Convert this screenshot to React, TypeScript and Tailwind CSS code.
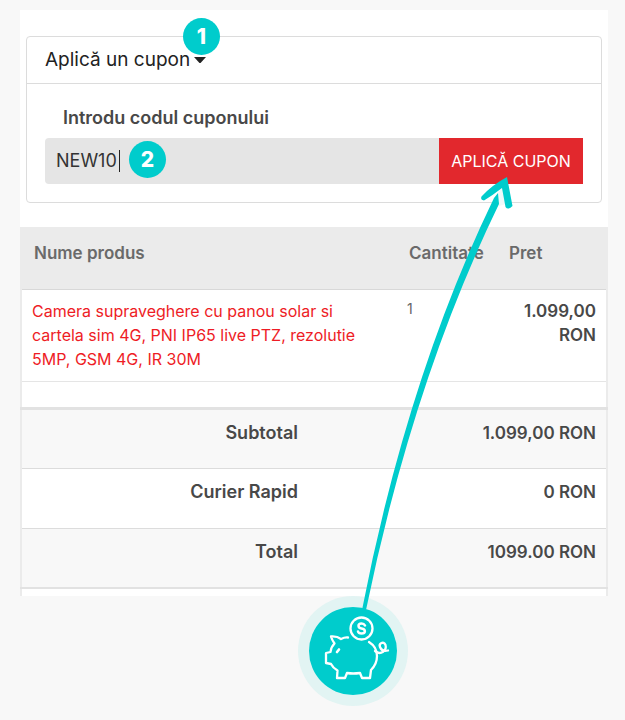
import { useState } from 'react';

const totals = [
  { label: 'Subtotal', value: '1.099,00 RON' },
  { label: 'Curier Rapid', value: '0 RON' },
  { label: 'Total', value: '1099.00 RON' },
];

function StepBadge({ step, className }: { step: number; className: string }) {
  return (
    <span
      className={`absolute flex size-[37px] items-center justify-center rounded-full bg-[#00cccc] text-[21px] font-extrabold text-white ${className}`}
    >
      {step}
    </span>
  );
}

function CouponBox() {
  const [code, setCode] = useState('NEW10');

  return (
    <section className="relative mx-1.5 rounded border border-[#dcdcdc]">
      <button type="button" className="flex w-full items-center gap-1 border-b border-[#dcdcdc] px-[18px] py-[11px] text-left text-[19px] leading-6 text-[#222]">
        Aplică un cupon
        <svg width="12" height="6" viewBox="0 0 12 6" fill="currentColor" aria-hidden="true">
          <path d="M0 0h12L7 5.4q-1 1-2 0z" />
        </svg>
      </button>
      <StepBadge step={1} className="-top-[19px] left-[156px]" />

      <form className="px-[18px] pt-[22px] pb-[18px]" onSubmit={(e) => e.preventDefault()}>
        <label htmlFor="coupon" className="block px-[18px] text-lg leading-6 font-semibold text-[#484848]">
          Introdu codul cuponului
        </label>
        <div className="relative mt-2 flex h-[46px]">
          <input
            id="coupon"
            value={code}
            onChange={(e) => setCode(e.target.value)}
            className="min-w-0 flex-1 rounded-l bg-[#e5e5e5] px-[11px] text-lg text-[#333] outline-none"
          />
          <span className="absolute top-3 left-[74px] h-[22px] w-px bg-[#222]" />
          <StepBadge step={2} className="top-[3px] left-[84px]" />
          <button type="submit" className="w-36 bg-[#e2282d] text-base text-white">
            APLICĂ CUPON
          </button>
        </div>
      </form>
    </section>
  );
}

function ProductTable() {
  return (
    <table className="mt-6 w-full table-fixed border-x-2 border-[#ebebeb] text-[17px] leading-6 text-[#484848]">
      <colgroup>
        <col />
        <col className="w-[100px]" />
        <col className="w-[106px]" />
      </colgroup>
      <thead>
        <tr className="h-[62px] border-b border-[#d8d8d8] bg-[#ebebeb] text-left align-top text-[#6a6a6a]">
          <th className="px-3 pt-[14px] font-semibold">Nume produs</th>
          <th className="pt-[14px] pl-2 font-semibold">Cantitate</th>
          <th className="pt-[14px] pl-2 font-semibold">Pret</th>
        </tr>
      </thead>
      <tbody>
        <tr className="h-[92px] border-b border-[#e5e5e5] align-top">
          <td className="pt-[9px] pr-8 pl-2.5 text-base leading-6">
            <a href="#produs" className="text-[#ee1c25]">
              Camera supraveghere cu panou solar si cartela sim 4G, PNI IP65 live PTZ, rezolutie 5MP, GSM 4G, IR 30M
            </a>
          </td>
          <td className="pt-[7px] pl-1.5 text-sm leading-6 text-[#666]">1</td>
          <td className="pt-[9px] pr-2.5 text-right font-semibold">1.099,00 RON</td>
        </tr>
      </tbody>
    </table>
  );
}

function TotalsTable() {
  return (
    <table className="w-full table-fixed border-x-2 border-[#ebebeb] text-[#484848]">
      <tbody className="border-t-[3px] border-b-2 border-[#e2e2e2]">
        {totals.map((row) => (
          <tr key={row.label} className="h-[60px] border-b border-[#dcdcdc] align-top odd:bg-[#f8f8f8]">
            <th className="pt-[11px] pr-4 text-right text-lg leading-6 font-semibold">{row.label}</th>
            <td className="pt-[11px] pr-2.5 text-right text-[17px] leading-6 font-semibold">{row.value}</td>
          </tr>
        ))}
      </tbody>
    </table>
  );
}

function PiggyBank() {
  return (
    <div className="relative flex size-[110px] items-center justify-center rounded-full bg-[#e2f4f3]">
      <div className="flex size-[88px] items-center justify-center rounded-full bg-[#00cccc]">
        <svg
          width="88"
          height="88"
          viewBox="309 607 88 88"
          fill="none"
          stroke="white"
          strokeWidth="2.3"
          strokeLinecap="round"
          strokeLinejoin="round"
          aria-label="Pușculiță"
        >
          <path d="M348 637.500Q345 637 341 639Q337 636 331 636.500Q332 640 334.500 643.500Q331 647 330.500 652L326 653V663L331 664Q333 668 337.500 670.500L337 678H345L347 673Q353 674 360 673L362 678H370L371 670Q377 664 377 656Q377 647 369 642" />
          <path d="M337 652l2-2.500" strokeWidth="2.600" />
          <path d="M375 651C381 656 387 650 385.500 645C383.500 640.500 378.500 643.500 380 647Q382 652 388 650.500" />
          <circle cx="361.500" cy="628.500" r="11" />
          <path d="M365 625.500Q364 623.500 361.500 623.500C357.500 623.500 357.500 628 361.500 628.500C366 629 366 633.500 361.500 633.500Q358.500 633.500 358 631.500" strokeWidth="2.500" />
        </svg>
      </div>
      <svg
        className="pointer-events-none absolute bottom-[95px] left-[57px]"
        width="170"
        height="440"
        viewBox="355 170 170 440"
        fill="#00cccc"
        aria-hidden="true"
      >
        <path d="M498 191L503 187L506 203L499 205z" fill="#eefafa" />
        <path d="M362 609Q407 377 494 197L498 192L499 203Q413 380 366 609z" />
        <path d="M507 176Q492 184 481.500 195.500Q480 199 484 199.500Q493 194 502 187L505.500 206Q508 209.500 512.500 205Z" />
      </svg>
    </div>
  );
}

export default function App() {
  return (
    <main className="min-h-screen bg-[#f8f8f8] pt-2.5 pr-[17px] pb-4 pl-5 font-['Inter',sans-serif]">
      <div className="bg-white pt-[26px]">
        <CouponBox />
        <ProductTable />
        <div className="h-[25px] border-x-2 border-[#ebebeb]" />
        <TotalsTable />
        <div className="h-[7px] border-x-2 border-[#ebebeb]" />
      </div>
      <div className="flex justify-center pl-[77px]">
        <PiggyBank />
      </div>
    </main>
  );
}
